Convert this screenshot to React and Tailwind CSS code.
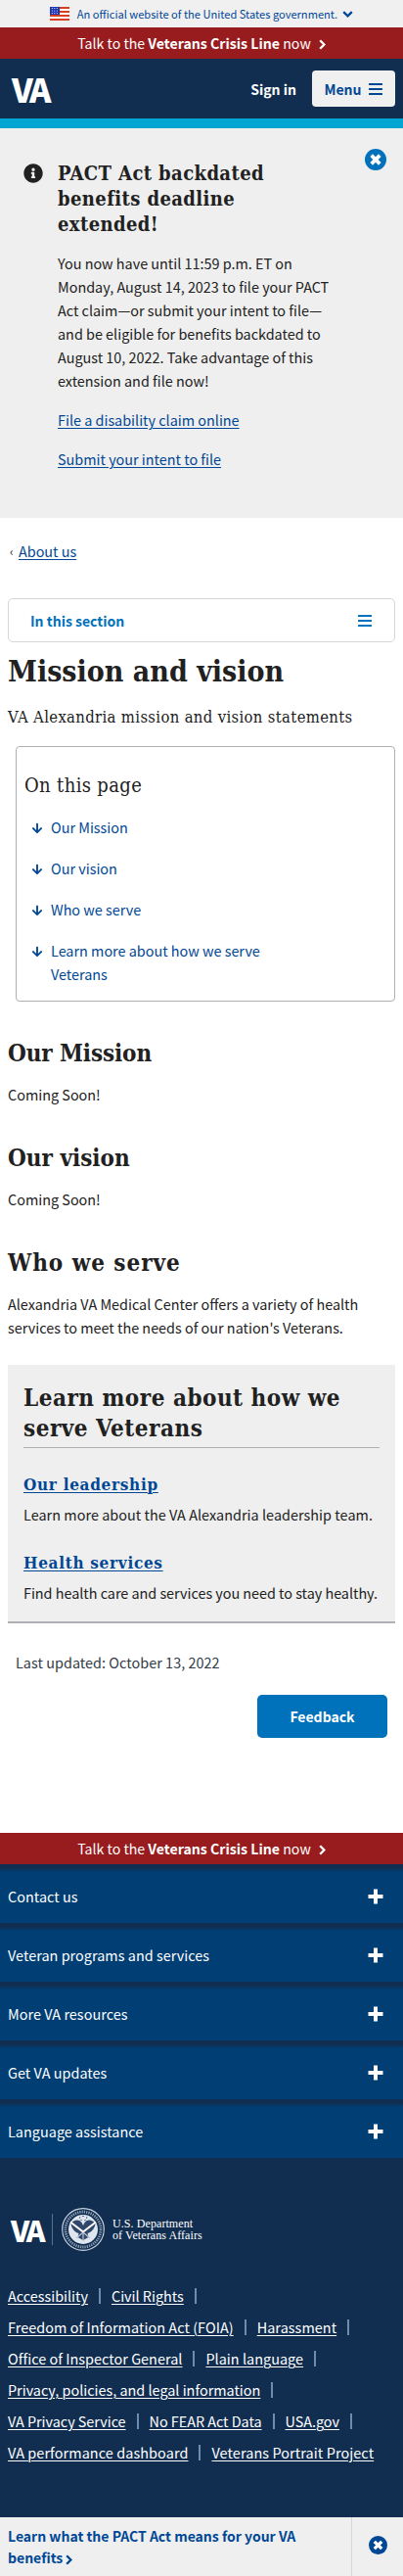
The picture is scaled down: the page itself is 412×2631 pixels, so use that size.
import React from "react";
import { FaInfoCircle, FaArrowDown } from "react-icons/fa";

const link = "text-[#004795] underline underline-offset-[2px] decoration-1";

function ChevronRight({ className }) {
  return (
    <svg width="7" height="11" viewBox="0 0 7 11" className={className}>
      <path d="M1.200 1.200 5.400 5.500 1.200 9.800" fill="none" stroke="currentColor" strokeWidth="2.300" />
    </svg>
  );
}

function CloseIcon({ size, className }) {
  return (
    <svg width={size} height={size} viewBox="0 0 22 22" className={className}>
      <circle cx="11" cy="11" r="11" fill="currentColor" />
      <path d="M6.700 6.700l8.600 8.600M15.300 6.700l-8.600 8.600" stroke="#fff" strokeWidth="3.800" />
    </svg>
  );
}

function Bars() {
  return (
    <svg width="14" height="12" viewBox="0 0 14 12">
      <path d="M.8 1h12.400M.8 6h12.400M.8 11h12.400" stroke="currentColor" strokeWidth="2" strokeLinecap="round" />
    </svg>
  );
}

function CrisisLine() {
  return (
    <div className="flex h-8 items-center justify-center bg-[#981b1e] text-[14.15px] leading-8 text-white">
      <span>Talk to the <b>Veterans Crisis Line</b> now</span>
      <ChevronRight className="ml-2 mt-0.5" />
    </div>
  );
}

function FlagIcon() {
  return (
    <svg width="20" height="14" viewBox="0 0 20 14" className="mr-2">
      <rect width="20" height="14" fill="#fff" />
      {[0, 4, 8, 12].map((y) => <rect key={y} y={y} width="20" height="2" fill="#db3e1f" />)}
      <rect width="10" height="8" fill="#1e33b1" />
      {[1.5, 4, 6.5].map((y) => [1.5, 4, 6.5].map((x) => <circle key={x + "-" + y} cx={x + 0.8} cy={y} r="0.6" fill="#fff" />))}
    </svg>
  );
}

function SealIcon() {
  return (
    <svg width="44" height="44" viewBox="0 0 44 44" className="ml-[9px]">
      <circle cx="22" cy="22" r="21.300" fill="none" stroke="#c9d3e0" strokeWidth="1.200" />
      <circle cx="22" cy="22" r="18" fill="none" stroke="#8d9db3" strokeWidth="2.800" strokeDasharray="1.300 1" />
      <circle cx="22" cy="22" r="15" fill="#dfe6ef" />
      <path d="M9.500 16c3-4 8-5 11-1l1.500 3 1.500-3c3-4 8-3 11 1-.5 5-4 9-8 10l1 4-5.500 3-5.500-3 1-4c-4-1-7.500-5-8-10z" fill="#30466a" />
      <path d="M9 14.500l13 10 13-10" stroke="#fff" strokeWidth="2" fill="none" />
      <path d="M15 31l7-6 7 6M22 25v9" stroke="#b8c5d6" strokeWidth="1.200" fill="none" />
      <path d="M18 10h1.200M21.400 8.500h1.200M25 10h1.200M19.500 12.500h1M23.500 12.500h1" stroke="#112e51" strokeWidth="1.200" />
    </svg>
  );
}

function PlusIcon() {
  return (
    <svg width="16" height="16" viewBox="0 0 16 16">
      <path d="M6 .5h4V6h5.500v4H10v5.500H6V10H.5V6H6z" fill="#fff" />
    </svg>
  );
}

const serif = "font-['DejaVu_Serif_Condensed','DejaVu_Serif',serif] [font-stretch:condensed]";

const footerRows = [
  { cls: "tracking-normal", items: ["Accessibility", "Civil Rights"] },
  { cls: "tracking-[0.06px]", items: ["Freedom of Information Act (FOIA)", "Harassment"] },
  { cls: "tracking-[0.04px]", items: ["Office of Inspector General", "Plain language"] },
  { cls: "tracking-normal", items: ["Privacy, policies, and legal information"] },
  { cls: "tracking-[-0.03px]", items: ["VA Privacy Service", "No FEAR Act Data", "USA.gov"] },
  { cls: "tracking-[0.1px]", items: ["VA performance dashboard", "Veterans Portrait Project"] },
];

export default function App() {
  return (
    <div className="w-[412px] bg-white font-['Noto_Sans_CJK_SC',sans-serif] text-[14.4px] leading-6 text-[#212121]">
      <div className="flex h-7 items-center justify-center bg-[#f0f0f0] text-[11.1px] text-[#004795]">
        <FlagIcon />
        <span>An official website of the United States government.</span>
        <svg width="11" height="7" viewBox="0 0 11 7" className="ml-[5px]">
          <path d="M1.200 1.200 5.500 5.300 9.800 1.200" fill="none" stroke="currentColor" strokeWidth="2.300" />
        </svg>
      </div>
      <CrisisLine />
      <header className="flex h-[71px] items-center border-b-[10px] border-[#00a6d2] bg-[#112e51] pl-3 pr-2 text-[14px] text-white">
        <span className="text-[34px] font-black leading-none tracking-[-3px]">VA</span>
        <b className="ml-auto">Sign in</b>
        <button className="ml-4 flex h-[37px] w-[85px] items-center justify-center gap-2 rounded bg-[#f0f0f0] font-bold text-[#004795]">
          Menu <Bars />
        </button>
      </header>

      <section className="flex h-[398px] bg-[#efefef] pl-6 pr-[17px]">
        <FaInfoCircle className="mt-9 size-5 shrink-0" />
        <div className="ml-[15px] mt-[33px] w-[290px] whitespace-nowrap">
          <h2 className={`${serif} text-[20px] font-bold leading-[26px] tracking-[0.4px]`}>
            PACT Act backdated<br />benefits deadline<br />extended!
          </h2>
          <p className="mt-[15px]">
            You now have until 11:59 p.m. ET on<br />Monday, August 14, 2023 to file your PACT<br />Act claim—or submit your intent to file—<br />and be eligible for benefits backdated to<br />August 10, 2022. Take advantage of this<br />extension and file now!
          </p>
          <p className="mt-4"><a className={link}>File a disability claim online</a></p>
          <p className="mt-4"><a className={link}>Submit your intent to file</a></p>
        </div>
        <CloseIcon size={22} className="ml-auto mt-[21px] shrink-0 text-[#0071bb]" />
      </section>

      <main className="h-[1343px] px-2">
        <nav className="flex pt-[22px]">
          <span className="w-[11px] pl-0.5 text-[12px]">‹</span>
          <a className={link}>About us</a>
        </nav>
        <div className="mt-9 flex h-[45px] items-center justify-between rounded-[5px] border border-[#d6d7d9] pl-[22px] pr-[23px] text-[14px] text-[#0071bb]">
          <b>In this section</b>
          <Bars />
        </div>
        <h1 className={`${serif} mt-2.5 text-[30px] font-bold leading-10`}>Mission and vision</h1>
        <p className={`${serif} mt-[14px] whitespace-nowrap text-[16.5px] leading-[26px] tracking-[0.35px]`}>VA Alexandria mission and vision statements</p>
        <div className="ml-2 mt-4 h-[261px] rounded border border-[#aeb0b5] pl-[8px] pt-6">
          <h2 className={`${serif} text-[20px] leading-[30px] tracking-[0.35px]`}>On this page</h2>
          <ul className="mt-4 flex flex-col gap-[18px] pl-[7px] text-[#004795]">
            {["Our Mission", "Our vision", "Who we serve", "Learn more about how we serve Veterans"].map((t) => (
              <li key={t} className="flex">
                <FaArrowDown className="mr-2 mt-[7px] size-3 shrink-0" />
                <span className="w-[240px]">{t}</span>
              </li>
            ))}
          </ul>
        </div>
        <h2 className={`${serif} mt-[37px] text-[24px] font-bold leading-[31px] tracking-[-0.1px]`}>Our Mission</h2>
        <p className="mt-[15px]">Coming Soon!</p>
        <h2 className={`${serif} mt-[37px] text-[24px] font-bold leading-[31px]`}>Our vision</h2>
        <p className="mt-[15px]">Coming Soon!</p>
        <h2 className={`${serif} mt-[37px] text-[24px] font-bold leading-[31px] tracking-[0.95px]`}>Who we serve</h2>
        <p className="mt-[15px] whitespace-nowrap">Alexandria VA Medical Center offers a variety of health<br />services to meet the needs of our nation's Veterans.</p>
        <section className="mt-[26px] h-[264px] whitespace-nowrap border-b-2 border-[#aeb0b5] bg-[#efefef] px-4 pt-[18px]">
          <h2 className={`${serif} h-[67px] border-b border-[#aeb0b5] text-[24px] font-bold leading-[31px] tracking-[0.5px]`}>Learn more about how we<br />serve Veterans</h2>
          <h3 className={`${serif} mt-6 text-[17px] font-bold leading-[26px] tracking-[0.7px]`}><a className={link}>Our leadership</a></h3>
          <p className="mt-[6px] tracking-[0.04px]">Learn more about the VA Alexandria leadership team.</p>
          <h3 className={`${serif} mt-[24px] text-[17px] font-bold leading-[26px] tracking-[0.7px]`}><a className={link}>Health services</a></h3>
          <p className="mt-[6px] tracking-[-0.02px]">Find health care and services you need to stay healthy.</p>
        </section>
        <p className="ml-2 mt-7 tracking-[0.04px] text-[#323a45]">Last updated: October 13, 2022</p>
        <button className="ml-auto mr-2 mt-[21px] flex h-11 w-[133px] items-center justify-center rounded-[5px] bg-[#0071bb] text-[14px] font-bold text-white">Feedback</button>
      </main>

      <footer className="h-[699px] bg-[#112e51] text-white">
        <CrisisLine />
        {["Contact us", "Veteran programs and services", "More VA resources", "Get VA updates", "Language assistance"].map((t) => (
          <div key={t} className="flex h-[60px] items-center justify-between bg-[linear-gradient(#112e51_4px,#003e73_8px)] pl-2 pr-5 pt-[6px]">
            <span className="tracking-[0.04px]">{t}</span>
            <PlusIcon />
          </div>
        ))}
        <div className="mt-[51px] flex h-11 items-center pl-[11px]">
          <span className="w-[42px] text-[30px] font-black leading-none tracking-[-3px]">VA</span>
          <span className="h-8 w-px bg-[#5b6f8a]" />
          <SealIcon />
          <span className="ml-2 whitespace-nowrap font-['Liberation_Serif',serif] text-[12px] leading-3 tracking-[0.08px]">U.S. Department<br />of Veterans Affairs</span>
        </div>
        <div className="mt-[30px] flex flex-col">
          {footerRows.map((row, r) => (
            <div key={r} className={`flex h-8 items-center whitespace-nowrap pl-2 ${row.cls}`}>
              {row.items.map((t, i) => (
                <React.Fragment key={t}>
                  <a className="underline decoration-1 underline-offset-[2px]">{t}</a>
                  {!(r === 5 && i === 1) && <span className="mx-[11px] h-4 w-0.5 bg-[#6f8bb0]" />}
                </React.Fragment>
              ))}
            </div>
          ))}
        </div>
      </footer>

      <div className="flex h-[60px] bg-[#efefef] text-[14px] font-bold leading-[22px] text-[#004795]">
        <p className="h-full w-[360px] border-r border-[#d6d7d9] pl-2 pt-2">
          Learn what the PACT Act means for your VA<br />benefits <ChevronRight className="inline" />
        </p>
        <span className="flex flex-1 items-center justify-center pb-[3px]"><CloseIcon size={19} /></span>
      </div>
    </div>
  );
}
